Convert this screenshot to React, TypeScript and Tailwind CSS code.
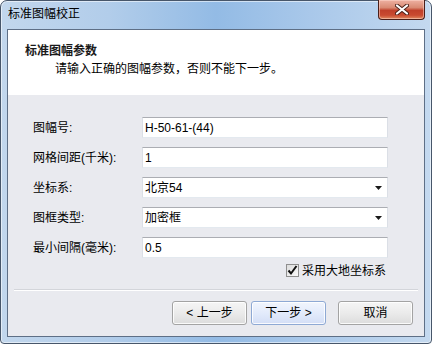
import React from "react";

const font = { fontFamily: '"Liberation Sans", "Noto Sans CJK SC", sans-serif' };

function TextBox({ value, dropdown }: { value: string; dropdown?: boolean }) {
  return (
    <div className="w-[246px] h-[21px] bg-white border border-t-[#abadb3] border-l-[#dbdfe6] border-r-[#dbdfe6] border-b-[#e3e9ef] flex items-center justify-between pl-[2px] pr-[5px]">
      <span className="text-[12px] leading-[16px] text-black">{value}</span>
      {dropdown && (
        <svg width="7" height="4" viewBox="0 0 7 4">
          <path d="M0 0 H7 L3.5 4 Z" fill="#1a1a1a" />
        </svg>
      )}
    </div>
  );
}

function Row({ label, children }: { label: string; children: React.ReactNode }) {
  return (
    <div className="flex items-center h-[21px]">
      <span className="w-[109px] text-[12px] leading-[16px] text-black">{label}</span>
      {children}
    </div>
  );
}

function Button({ children, primary }: { children: React.ReactNode; primary?: boolean }) {
  return (
    <div
      className={
        "h-[24px] flex items-center justify-center rounded-[3px] border text-[12px] leading-[16px] text-black shadow-[inset_0_0_0_1px_rgba(255,255,255,0.85)] " +
        (primary
          ? "w-[75px] border-[#8ea9d4] bg-gradient-to-b from-[#f1f5fd] via-[#e3ebfb] to-[#d3def6]"
          : "w-[75px] border-[#a3a3a3] bg-gradient-to-b from-[#f5f5f5] via-[#ebebeb] to-[#dcdcdc]")
      }
    >
      {children}
    </div>
  );
}

export default function App() {
  return (
    <div className="w-[432px] h-[344px] bg-white" style={font}>
      <div className="w-full h-full rounded-t-[7px] rounded-b-[4px] border border-[#47566a] bg-[linear-gradient(90deg,#c2d7ed_0%,#b2cdea_25%,#93bbe5_50%,#a9c8ea_72%,#c4d9ef_100%)] shadow-[inset_0_0_0_1px_rgba(255,255,255,0.55)] flex flex-col px-[6px] pb-[6px]">
        {/* title bar */}
        <div className="h-[28px] flex justify-between">
          <span className="mt-[5px] ml-[1px] text-[12px] leading-[16px] text-black">标准图幅校正</span>
          <div className="-mt-[1px] w-[47px] h-[20px] rounded-b-[4px] border border-[#4a1e18] border-t-0 bg-[linear-gradient(180deg,#eeb1a2_0%,#d98a73_40%,#c0402a_55%,#c94a30_80%,#e08a60_100%)] shadow-[inset_0_0_0_1px_rgba(255,220,210,0.5)] flex items-center justify-center">
            <svg width="14" height="11" viewBox="0 0 14 11">
              <path d="M2 1.5 L12 9.5 M12 1.5 L2 9.5" stroke="#4a2018" strokeWidth="4" strokeLinecap="round" />
              <path d="M2 1.5 L12 9.5 M12 1.5 L2 9.5" stroke="#ffffff" strokeWidth="2.2" strokeLinecap="round" />
            </svg>
          </div>
        </div>
        {/* client */}
        <div className="flex-1 border border-[#5e6f86] bg-[#e9eaef] flex flex-col">
          <div className="h-[65px] bg-white pt-[13px] pl-[17px]">
            <div className="text-[12px] leading-[16px] font-bold text-[#1a1a1a]">标准图幅参数</div>
            <div className="mt-[2px] pl-[30px] text-[12px] leading-[16px] text-black">
              请输入正确的图幅参数，否则不能下一步。
            </div>
          </div>
          <div className="pt-[22px] pl-[25px] flex flex-col gap-[9px]">
            <Row label="图幅号:">
              <TextBox value="H-50-61-(44)" />
            </Row>
            <Row label="网格间距(千米):">
              <TextBox value="1" />
            </Row>
            <Row label="坐标系:">
              <TextBox value="北京54" dropdown />
            </Row>
            <Row label="图框类型:">
              <TextBox value="加密框" dropdown />
            </Row>
            <Row label="最小间隔(毫米):">
              <TextBox value="0.5" />
            </Row>
          </div>
          <div className="mt-[6px] flex items-center justify-end pr-[38px] h-[13px]">
            <div className="w-[13px] h-[13px] border border-[#8f8f8f] bg-gradient-to-br from-[#dcdcdc] to-[#fafafa] flex items-center justify-center">
              <svg width="11" height="11" viewBox="0 0 11 11">
                <path d="M1.5 5.5 L4 8.5 L9.5 1" stroke="#111" strokeWidth="2" fill="none" />
              </svg>
            </div>
            <span className="ml-[3px] text-[12px] leading-[16px] text-black">采用大地坐标系</span>
          </div>
          <div className="mt-[12px] mx-[6px] h-[1px] bg-[#d3d5da] border-b border-white box-content" />
          <div className="mt-[10px] flex justify-end pr-[11px]">
            <Button>&lt; 上一步</Button>
            <div className="w-[4px]" />
            <Button primary>下一步 &gt;</Button>
            <div className="w-[12px]" />
            <Button>取消</Button>
          </div>
        </div>
      </div>
    </div>
  );
}
